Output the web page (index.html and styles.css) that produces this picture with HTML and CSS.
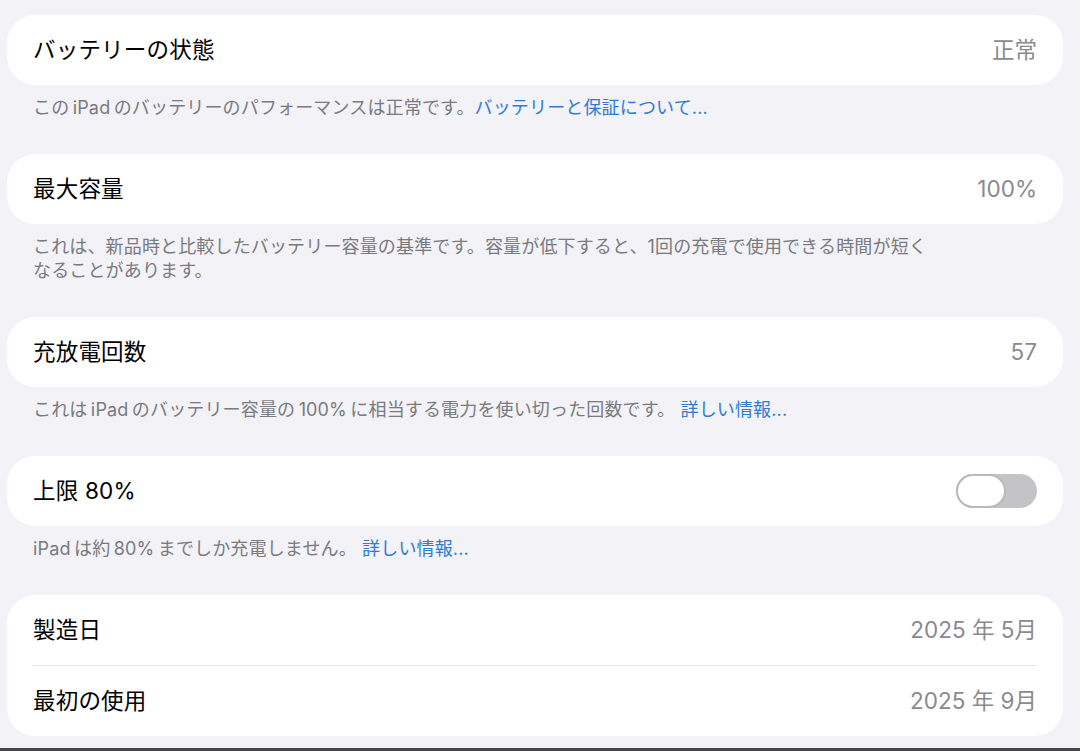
FILE: index.html
```html
<!DOCTYPE html>
<html lang="ja">
<head>
<meta charset="utf-8">
<title>バッテリー</title>
<link rel="stylesheet" href="styles.css">
</head>
<body>
<main class="page">
  <section class="group">
    <div class="card">
      <div class="row"><span class="label">バッテリーの状態</span><span class="value">正常</span></div>
    </div>
    <p class="note">この&thinsp;iPad&thinsp;のバッテリーのパフォーマンスは正常です。<a class="link">バッテリーと保証について...</a></p>
  </section>

  <section class="group">
    <div class="card">
      <div class="row"><span class="label">最大容量</span><span class="value">100%</span></div>
    </div>
    <p class="note">これは、新品時と比較したバッテリー容量の基準です。容量が低下すると、1回の充電で使用できる時間が短く<br>なることがあります。</p>
  </section>

  <section class="group">
    <div class="card">
      <div class="row"><span class="label">充放電回数</span><span class="value">57</span></div>
    </div>
    <p class="note">これは&thinsp;iPad&thinsp;のバッテリー容量の&thinsp;100%&thinsp;に相当する電力を使い切った回数です。 <a class="link">詳しい情報...</a></p>
  </section>

  <section class="group">
    <div class="card">
      <div class="row"><span class="label">上限 80%</span><span class="toggle"><span class="knob"></span></span></div>
    </div>
    <p class="note">iPad&thinsp;は約&thinsp;80%&thinsp;までしか充電しません。 <a class="link">詳しい情報...</a></p>
  </section>

  <section class="group">
    <div class="card">
      <div class="row"><span class="label">製造日</span><span class="value">2025 年 5月</span></div>
      <div class="divider"></div>
      <div class="row"><span class="label">最初の使用</span><span class="value">2025 年 9月</span></div>
    </div>
  </section>
</main>
<div class="edge"></div>
</body>
</html>
```

FILE: styles.css
```css
html, body {
  margin: 0;
  padding: 0;
}

body {
  width: 1080px;
  height: 751px;
  overflow: hidden;
  background: #f2f2f7;
  font-family: Inter, "Noto Sans CJK JP", sans-serif;
  display: flex;
  flex-direction: column;
}

.page {
  flex: 1;
  padding: 15px 17px 0 7px;
  display: flex;
  flex-direction: column;
}

.group {
  display: flex;
  flex-direction: column;
}

.card {
  background: #ffffff;
  border-radius: 28px;
  display: flex;
  flex-direction: column;
}

.row {
  height: 70px;
  padding: 0 26px;
  display: flex;
  align-items: center;
  justify-content: space-between;
}

.label {
  font-size: 22.5px;
  line-height: 30px;
  margin-top: -1px;
  color: #000000;
  letter-spacing: 0.2px;
}

.value {
  font-size: 22.5px;
  line-height: 30px;
  margin-top: -1px;
  color: #8a8a8e;
}

.divider {
  height: 1px;
  margin: 0 26px;
  background: #e4e4e9;
}

.note {
  margin: 0;
  padding: 11px 26px 34px;
  font-size: 18px;
  line-height: 24px;
  letter-spacing: 0.15px;
  color: #7a7a7f;
}

.link {
  color: #2f7bd1;
  text-decoration: none;
}

.toggle {
  position: relative;
  width: 81px;
  height: 34px;
  margin-top: -1px;
  border-radius: 17px;
  background: #c4c4c7;
}

.knob {
  position: absolute;
  left: 0;
  top: 0;
  width: 50px;
  height: 34px;
  box-sizing: border-box;
  border-radius: 17px;
  background: #ffffff;
  border: 2px solid #b9b9bd;
}

.edge {
  height: 3px;
  background: #48484a;
}
```
